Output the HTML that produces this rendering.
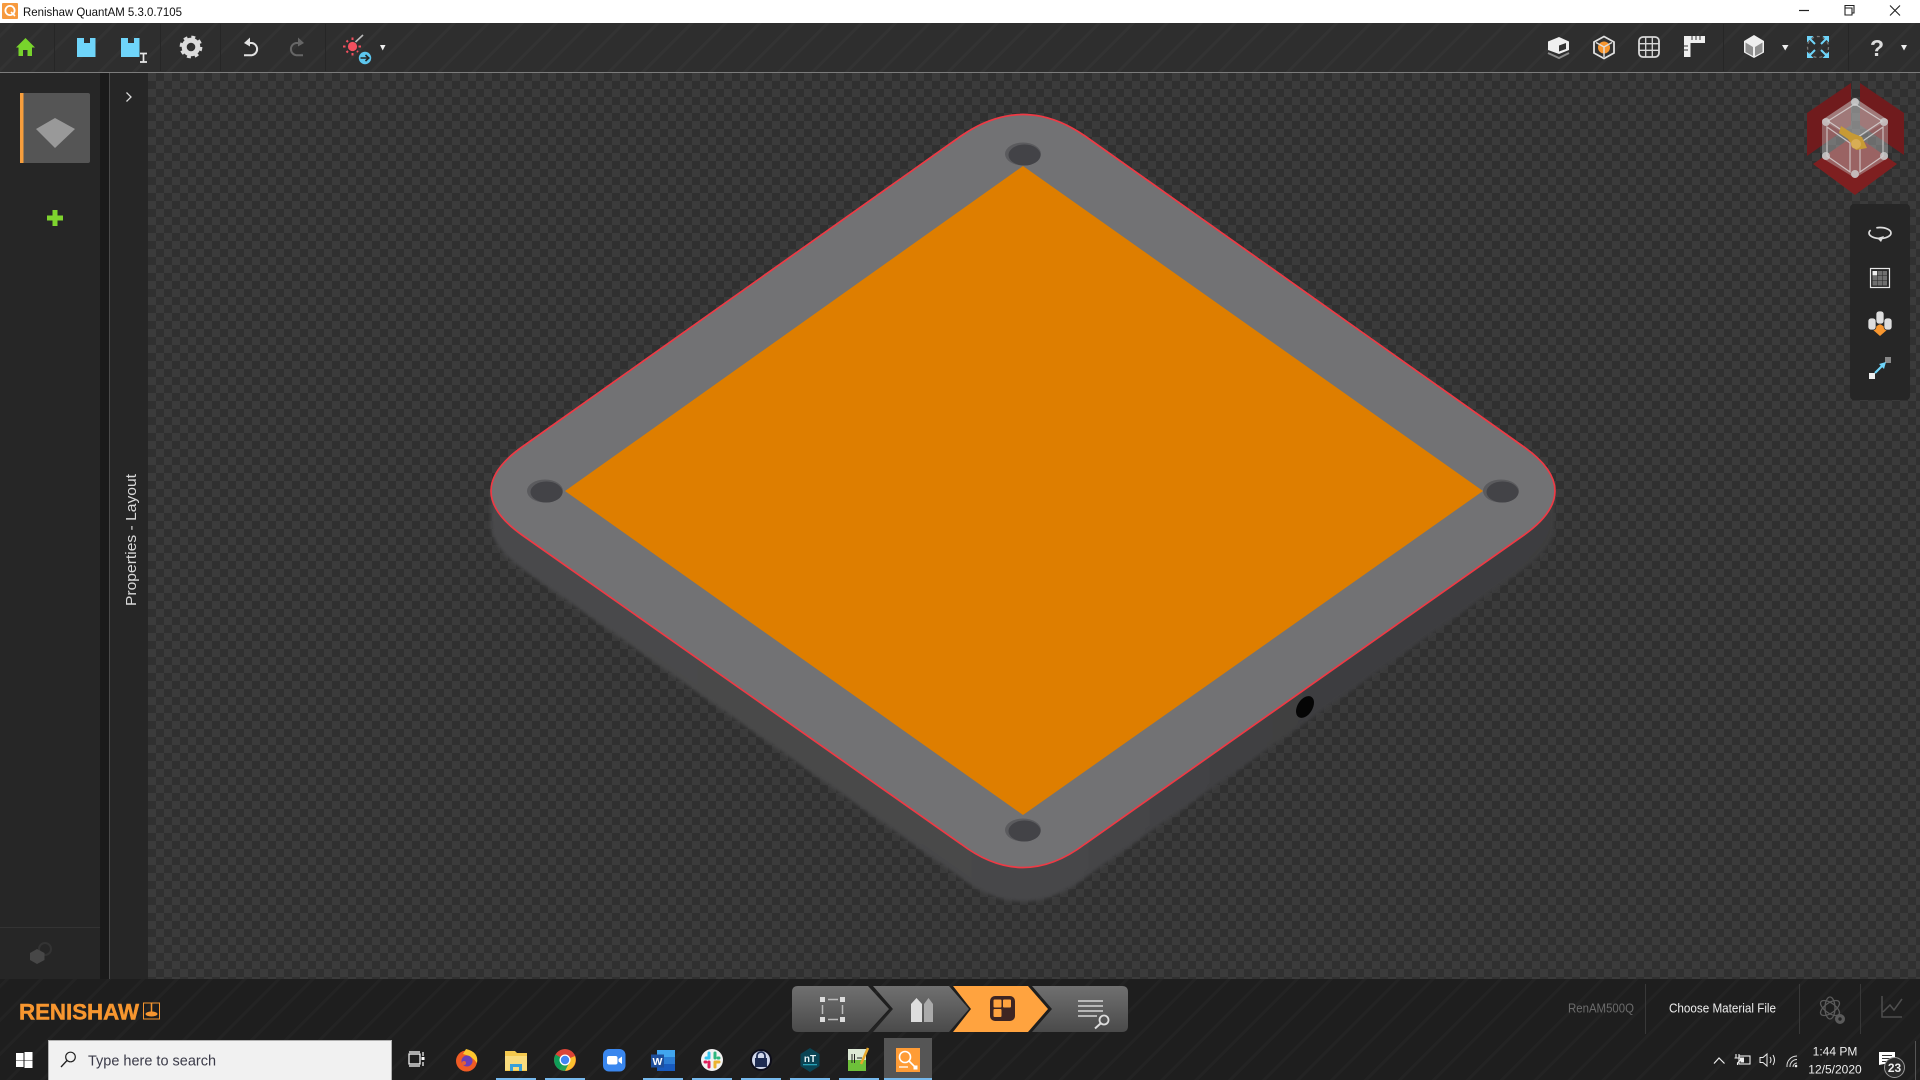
<!DOCTYPE html>
<html><head><meta charset="utf-8"><title>Renishaw QuantAM</title>
<style>html,body{margin:0;padding:0;background:#222;width:1920px;height:1080px;overflow:hidden}svg{display:block}text{font-family:"Liberation Sans",sans-serif}</style></head>
<body>
<svg xmlns="http://www.w3.org/2000/svg" width="1920" height="1080" viewBox="0 0 1920 1080">
<defs>
<pattern id="chk" x="148" y="73" width="16" height="16" patternUnits="userSpaceOnUse">
<rect width="16" height="16" fill="#303030"/><rect width="8" height="8" fill="#3b3b3b"/><rect x="8" y="8" width="8" height="8" fill="#3b3b3b"/>
</pattern>
<pattern id="st" width="24" height="24" patternUnits="userSpaceOnUse" patternTransform="rotate(45)">
<rect width="24" height="24" fill="none"/><rect width="3" height="24" fill="#fff" opacity=".022"/>
</pattern>
<linearGradient id="wall" gradientUnits="userSpaceOnUse" x1="491" y1="0" x2="1586" y2="0">
<stop offset="0" stop-color="#49494b"/><stop offset=".5" stop-color="#474749"/><stop offset=".75" stop-color="#3e3e40"/><stop offset="1" stop-color="#3c3c3e"/>
</linearGradient>
<linearGradient id="seg" x1="0" y1="0" x2="0" y2="1"><stop offset="0" stop-color="#707070"/><stop offset="1" stop-color="#4a4a4a"/></linearGradient>
<path id="plate" d="M961,136 Q1023,93 1085,136 L1524,447 Q1586,491 1524,535 L1085,844 Q1023,891 961,844 L522,535 Q460,491 522,447 Z"/>
<filter id="b1"><feGaussianBlur stdDeviation="1.8"/></filter>
</defs>

<!-- base -->
<rect width="1920" height="1080" fill="#222"/>
<rect x="148" y="73" width="1772" height="906" fill="url(#chk)"/>

<!-- title bar -->
<rect width="1920" height="23" fill="#fff"/>
<rect x="2" y="3" width="16" height="16" rx="1" fill="#f79a3e"/>
<circle cx="10" cy="10.5" r="4.6" fill="none" stroke="#fff" stroke-width="1.8"/><path d="M11,12 L15,16" stroke="#fff" stroke-width="1.6"/>
<text x="23" y="16" font-size="12.2" fill="#111" textLength="159" lengthAdjust="spacingAndGlyphs">Renishaw QuantAM 5.3.0.7105</text>
<path d="M1799,10.5 H1809" stroke="#222" stroke-width="1.2"/>
<path d="M1845,8 V5.5 H1854 V13 H1852 M1845,8 H1852 V15 H1845 Z" fill="none" stroke="#222" stroke-width="1.1"/>
<path d="M1890,5.5 L1900,15.5 M1900,5.5 L1890,15.5" stroke="#222" stroke-width="1.1"/>

<!-- toolbar -->
<rect y="23" width="1920" height="49" fill="#2e2e2e"/>
<rect y="23" width="1920" height="49" fill="url(#st)"/>
<rect y="72" width="1920" height="1" fill="#7c7c7c"/>
<g stroke="#262626" stroke-width="1"><path d="M54.5,24 V71 M160.5,24 V71 M220.5,24 V71 M325.5,24 V71 M1723.5,24 V71 M1848.5,24 V71"/></g>
<!-- home -->
<path d="M25.5,38 L35,47.5 H32 V56 H27.5 V50 H23 V56 H18.5 V47.5 H16 Z" fill="#78d42c"/>
<!-- save -->
<path d="M77,38 H84 V43 H90 V38 H95.5 V57 H77 Z" fill="#6fd5fa"/>
<path d="M121,38 H128 V43 H134 V38 H139.5 V57 H121 Z" fill="#6fd5fa"/>
<path d="M140,53.5 H147 M143.5,53.5 V62 M140,62 H147" stroke="#e8e8e8" stroke-width="1.7" fill="none"/>
<!-- gear -->
<circle cx="191" cy="47" r="6.8" fill="none" stroke="#dcdcdc" stroke-width="5"/>
<circle cx="191" cy="47" r="9.8" fill="none" stroke="#dcdcdc" stroke-width="3.2" stroke-dasharray="3.85 3.85"/>
<!-- undo / redo -->
<path d="M246,43 H252 A6.2,6.2 0 0 1 252,55.2 H244" fill="none" stroke="#e2e2e2" stroke-width="2"/>
<path d="M250,37.5 L244,43 L250,46.5 Z" fill="#e2e2e2"/>
<path d="M302,43 H296 A6.2,6.2 0 0 0 296,55.2 H303" fill="none" stroke="#666" stroke-width="2"/>
<path d="M298,37.5 L304,43 L298,46.5 Z" fill="#666"/>
<!-- laser -->
<circle cx="352.5" cy="46.5" r="4.6" fill="#f2505f"/>
<path d="M352.5,37.5 V40 M352.5,53 V55.5 M343,46.5 H345.5 M358.5,46.5 H361 M346.5,40.5 L348,42 M346.5,52.5 L348,51 M358,52 L357,51" stroke="#f2505f" stroke-width="2"/>
<path d="M355.5,42 L363,35" stroke="#bbb" stroke-width="1.6"/>
<circle cx="365" cy="58" r="6.2" fill="#5cc6ee"/>
<path d="M360.5,58 H368 M365.5,55 L368.8,58 L365.5,61" stroke="#222" stroke-width="1.6" fill="none"/>
<path d="M380,45 H385.5 L382.7,50.5 Z" fill="#eee"/>

<!-- right toolbar icons -->
<path d="M1559,37 L1569,41.5 V50 L1559,54 L1548,50 V41.5 Z" fill="#efefef"/>
<path d="M1559,45.5 L1566,43 V49 L1559,51.5 Z" fill="#333"/>
<path d="M1548,53 L1559,58 L1569,53" fill="none" stroke="#8a8a8a" stroke-width="2"/>
<path d="M1604,36.5 L1614,42 V53 L1604,58.5 L1594,53 V42 Z" fill="#333" stroke="#e0e0e0" stroke-width="1.8"/>
<circle cx="1604" cy="47.5" r="6" fill="#f7962f"/>
<path d="M1596,42.5 L1604,47 L1612,42.5 M1604,47 V57" fill="none" stroke="#e0e0e0" stroke-width="1.4"/>
<rect x="1639" y="37" width="20" height="20" rx="4" fill="none" stroke="#d8d8d8" stroke-width="1.8"/>
<path d="M1645.7,37 V57 M1652.3,37 V57 M1639,43.7 H1659 M1639,50.3 H1659" stroke="#d8d8d8" stroke-width="1.3"/>
<path d="M1684,36 H1705 V43 H1690.5 V57 H1684 Z" fill="#efefef"/>
<path d="M1692,36 V40 M1696,36 V40 M1700,36 V40 M1688,46 H1684 M1688,50 H1684" stroke="#333" stroke-width="1"/>
<path d="M1754,35 L1764,41 V52.5 L1754,58 L1744,52.5 V41 Z" fill="#eee"/>
<path d="M1745.5,42.5 L1753,47 V56 L1745.5,52 Z" fill="#8f8f8f"/><path d="M1762.5,42.5 L1755,47 V56 L1762.5,52 Z" fill="#8f8f8f"/>
<path d="M1782,45 H1788.5 L1785.2,50.5 Z" fill="#eee"/>
<!-- fullscreen -->
<circle cx="1818" cy="47" r="10.5" fill="none" stroke="#777" stroke-width="1.3" stroke-dasharray="3 3"/>
<g stroke="#6fd5fa" stroke-width="2" fill="none"><path d="M1809,38 L1815,44 M1827,38 L1821,44 M1809,56 L1815,50 M1827,56 L1821,50"/></g>
<path d="M1807,36 H1813.5 L1807,42.5 Z M1829,36 H1822.5 L1829,42.5 Z M1807,58 H1813.5 L1807,51.5 Z M1829,58 H1822.5 L1829,51.5 Z" fill="#6fd5fa"/>
<text x="1877" y="56" font-size="23" font-weight="bold" fill="#dcdcdc" text-anchor="middle">?</text>
<path d="M1901,45 H1907 L1904,50.5 Z" fill="#eee"/>

<!-- left sidebar -->
<rect y="73" width="100" height="906" fill="#262626"/>
<rect x="100" y="73" width="9" height="906" fill="#1a1a1a"/>
<rect x="109" y="73" width="1" height="906" fill="#4a4a4a"/>
<rect x="110" y="73" width="38" height="906" fill="#262626"/>
<rect x="0" y="927" width="100" height="1" fill="#333"/>
<rect x="20" y="93" width="70" height="70" rx="2" fill="#555"/>
<rect x="20" y="93" width="3.5" height="70" fill="#f79e3c"/>
<path d="M36,129 L55,118 L75,129 L55,148 Z" fill="#999"/>
<path d="M52.5,210 H57.5 V215.5 H63 V220.5 H57.5 V226 H52.5 V220.5 H47 V215.5 H52.5 Z" fill="#7ed42e"/>
<path d="M126.5,92.500 L131,97 L126.5,101.500" fill="none" stroke="#ddd" stroke-width="1.3"/>
<text transform="translate(136,606) rotate(-90)" font-size="14.5" fill="#d8d8d8" textLength="132" lengthAdjust="spacingAndGlyphs">Properties - Layout</text>
<circle cx="45" cy="949" r="6" fill="none" stroke="#333" stroke-width="2"/>
<path d="M37,949 L44.5,953 V960 L37,964 L30,960 V953 Z" fill="#474747"/>

<!-- 3D plate -->
<g filter="url(#b1)">
<use href="#plate" fill="url(#wall)" transform="translate(0,34)"/>
<rect x="491" y="491" width="1064" height="34" fill="url(#wall)"/>
</g>
<ellipse cx="1305" cy="707" rx="7.5" ry="12" fill="#050505" transform="rotate(32 1305 707)"/>
<use href="#plate" fill="#727274"/>
<use href="#plate" fill="none" stroke="#ee3a45" stroke-width="1.7"/>
<path d="M1023,166 L1483,491 L1023,815 L565,491 Z" fill="#de7e00"/>
<g>
<ellipse cx="1023" cy="154" rx="18" ry="11.5" fill="#5b5b5e"/><ellipse cx="1024.5" cy="155" rx="16" ry="10.5" fill="#434347"/>
<ellipse cx="545" cy="491" rx="18" ry="11.5" fill="#5b5b5e"/><ellipse cx="546.5" cy="492" rx="16" ry="10.5" fill="#434347"/>
<ellipse cx="1501" cy="491" rx="18" ry="11.5" fill="#5b5b5e"/><ellipse cx="1502.5" cy="492" rx="16" ry="10.5" fill="#434347"/>
<ellipse cx="1023" cy="830" rx="18" ry="11.5" fill="#5b5b5e"/><ellipse cx="1024.5" cy="831" rx="16" ry="10.5" fill="#434347"/>
</g>

<!-- view cube -->
<path d="M1807,113 L1851,83 V125 L1807,156 Z" fill="#701b1d"/>
<path d="M1860,83 L1904,113 V155 L1860,125 Z" fill="#701b1d"/>
<path d="M1813,164 L1855,135 L1897,164 L1855,195 Z" fill="#7e1f20"/>
<path d="M1855,98 L1888,120 V158 L1855,178 L1822,158 V120 Z" fill="#c0c0c0" opacity=".42"/>
<path d="M1855,98 L1888,120 L1855,140 L1822,120 Z" fill="#d0d0d0" opacity=".22"/>
<g fill="none" stroke="#dedede" stroke-width="1.2" opacity=".75"><path d="M1855,104 L1882,121 L1855,139 L1828,121 Z M1827,127 L1850,143 V172 L1827,156 Z M1883,127 L1860,143 V172 L1883,156 Z"/></g>
<g fill="#cfcfcf" opacity=".8"><circle cx="1855" cy="102" r="4"/><circle cx="1884" cy="122" r="4"/><circle cx="1884" cy="156" r="4"/><circle cx="1855" cy="174" r="4"/><circle cx="1826" cy="156" r="4"/><circle cx="1826" cy="122" r="4"/><circle cx="1855" cy="145" r="3.500"/></g>
<path d="M1841,126 L1852,133 L1862,137 L1867,148 L1856,150 L1848,139 L1839,133 Z" fill="#c79a35"/>
<circle cx="1856" cy="144" r="5" fill="#d8ad55"/>

<!-- right floating panel -->
<rect x="1850" y="204" width="60" height="196" rx="4" fill="#262626"/>
<g>
<ellipse cx="1880" cy="233" rx="11" ry="5.5" fill="none" stroke="#ddd" stroke-width="1.7" stroke-dasharray="30 6" />
<path d="M1884,236 L1877,238 L1881,242 Z" fill="#ddd"/>
<rect x="1870.5" y="268.5" width="19" height="19" fill="none" stroke="#e6e6e6" stroke-width="1.2"/>
<g fill="#6e6e6e"><rect x="1877.500" y="271" width="4.500" height="4.500"/><rect x="1882.500" y="271" width="4.500" height="4.500"/><rect x="1872.500" y="276" width="4.500" height="4.500"/><rect x="1877.500" y="276" width="4.500" height="4.500"/><rect x="1882.500" y="276" width="4.500" height="4.500"/><rect x="1872.500" y="281" width="4.500" height="4.500"/><rect x="1877.500" y="281" width="4.500" height="4.500"/><rect x="1882.500" y="281" width="4.500" height="4.500"/></g>
<rect x="1872.5" y="271" width="4.5" height="4.5" fill="#eee"/>
<path d="M1872,329 L1880,324 L1888,329 L1880,336 Z" fill="#f7962f"/>
<rect x="1876" y="311" width="8" height="13" rx="3" fill="#ddd" stroke="#262626" stroke-width=".7"/><rect x="1868" y="318" width="8" height="12" rx="3" fill="#ddd" stroke="#262626" stroke-width=".7"/><rect x="1884" y="318" width="8" height="12" rx="3" fill="#ddd" stroke="#262626" stroke-width=".7"/>
<rect x="1869" y="373" width="6" height="6" fill="#eee"/><rect x="1885" y="357" width="6" height="6" fill="#888"/>
<path d="M1875,373 L1884,364" stroke="#6fd5fa" stroke-width="2.2"/><path d="M1886,362 L1879,364 L1884,369 Z" fill="#6fd5fa"/>
</g>

<!-- bottom bar -->
<rect y="979" width="1920" height="101" fill="#1e1e1e"/>
<rect y="979" width="1920" height="101" fill="url(#st)"/>
<text x="19" y="1019.5" font-size="22.5" font-weight="bold" fill="#f7962f" textLength="120" lengthAdjust="spacingAndGlyphs" stroke="#f7962f" stroke-width=".5">RENISHAW</text>
<rect x="143.5" y="1003" width="16" height="16" fill="none" stroke="#f7962f" stroke-width="1"/>
<ellipse cx="151.5" cy="1014" rx="6" ry="2.5" fill="#f7962f"/><path d="M151.5,1003 V1012" stroke="#f7962f" stroke-width="1.5"/>

<!-- stepper -->
<path d="M798,986 H868 L889,1009 L868,1032 H798 Q792,1032 792,1026 V992 Q792,986 798,986 Z" fill="url(#seg)"/>
<path d="M873,986 H949 L969,1009 L949,1032 H873 L893,1009 Z" fill="url(#seg)"/>
<path d="M953,986 H1028 L1048,1009 L1028,1032 H953 L971,1009 Z" fill="#ffa33f"/>
<path d="M1032,986 H1122 Q1128,986 1128,992 V1026 Q1128,1032 1122,1032 H1032 L1052,1009 Z" fill="url(#seg)"/>
<g fill="#dcdcdc"><rect x="820" y="997" width="5" height="5"/><rect x="840" y="997" width="5" height="5"/><rect x="820" y="1017" width="5" height="5"/><rect x="840" y="1017" width="5" height="5"/></g>
<path d="M828,999.5 H838 M828,1019.5 H838 M822.5,1005 V1014 M842.5,1005 V1014" stroke="#bbb" stroke-width="1.5"/>
<path d="M911,1004 L916.5,998 L922,1004 V1022 H911 Z" fill="#dedede"/>
<path d="M924,1004 L928.5,998 L933,1004 V1022 H924 Z" fill="#aaa"/>
<rect x="990" y="996" width="25" height="25" rx="5" fill="#3e2522"/>
<rect x="993.5" y="999.500" width="8" height="8" rx="1" fill="#ffa33f"/><rect x="1003" y="999.500" width="8" height="8" rx="1" fill="#ffa33f"/><rect x="993.5" y="1009" width="8" height="8" rx="1" fill="#ffa33f"/>
<path d="M1078,1001 H1103 M1078,1006 H1103 M1078,1011 H1103 M1078,1016 H1097" stroke="#c4c4c4" stroke-width="1.8"/>
<circle cx="1104" cy="1020" r="4.5" fill="none" stroke="#ddd" stroke-width="1.8"/><path d="M1100.5,1023.5 L1095,1028.5" stroke="#ddd" stroke-width="2"/>

<!-- bottom right -->
<text x="1568" y="1012.5" font-size="12.5" fill="#6b6b6b" textLength="66" lengthAdjust="spacingAndGlyphs">RenAM500Q</text>
<text x="1669" y="1012.5" font-size="12.5" fill="#eee" textLength="107" lengthAdjust="spacingAndGlyphs">Choose Material File</text>
<path d="M1645.5,984 V1034 M1799.5,984 V1034 M1860.5,984 V1034" stroke="#383838"/>
<g fill="none" stroke="#5a5a5a" stroke-width="1.3"><ellipse cx="1830" cy="1008" rx="11" ry="5" transform="rotate(35 1830 1008)"/><ellipse cx="1830" cy="1008" rx="11" ry="5" transform="rotate(-35 1830 1008)"/><ellipse cx="1830" cy="1008" rx="11" ry="5" transform="rotate(90 1830 1008)"/></g>
<circle cx="1840" cy="1019" r="5" fill="#5a5a5a"/><circle cx="1840" cy="1019" r="1.7" fill="#222"/>
<path d="M1882,996 V1017 H1902 M1883,1012 L1890,1005 L1894,1010 L1902,999" fill="none" stroke="#4e4e4e" stroke-width="1.5"/>

<!-- taskbar -->
<g fill="#fff"><rect x="16" y="1053" width="7.5" height="7"/><rect x="24.5" y="1052" width="8" height="8"/><rect x="16" y="1060.5" width="7.5" height="6.5"/><rect x="24.5" y="1060.5" width="8" height="7.5"/></g>
<rect x="48.5" y="1040.5" width="343" height="40" fill="#f1f1f1" stroke="#b0b0b0"/>
<circle cx="70.5" cy="1057" r="4.8" fill="none" stroke="#222" stroke-width="1.2"/><path d="M67,1060.5 L61,1067" stroke="#222" stroke-width="1.3"/>
<text x="88" y="1065.5" font-size="15" fill="#3a3a48" textLength="128" lengthAdjust="spacingAndGlyphs">Type here to search</text>
<path d="M409,1054 H420 V1064 H409 Z M409,1052 H420 M409,1066 H420 M423,1052 V1056 M423,1062 V1066" fill="none" stroke="#fff" stroke-width="1.2"/><rect x="421.5" y="1057" width="3" height="3" fill="#fff"/>

<!-- app icons -->
<circle cx="466.5" cy="1061" r="10.5" fill="#ef5b24"/><path d="M466,1049 Q479,1052 477,1063 Q472,1056 463,1054 Z" fill="#fcc52e"/><circle cx="467" cy="1061" r="5.5" fill="#6a3fb5"/><circle cx="464" cy="1063" r="2" fill="#e0603a"/>
<path d="M505,1051 H515 L517,1053 H527 V1071 H505 Z" fill="#f4c94e"/><rect x="505" y="1056" width="22" height="14" fill="#f9dc7d"/><path d="M510,1064 H522 V1071 H519 V1067 H513 V1071 H510 Z" fill="#3aa0d8"/>
<circle cx="565" cy="1060" r="11" fill="#db4437"/><path d="M565,1060 L555.5,1054.5 A11,11 0 0 0 559.5,1069.5 Z" fill="#0f9d58"/><path d="M565,1060 L559.5,1069.5 A11,11 0 0 0 575,1056 Z" fill="#fbc02d"/><path d="M565,1060 L555.5,1065.5 A11,11 0 0 0 565,1071 L570.5,1060 Z" fill="#0f9d58" opacity=".9"/><circle cx="565" cy="1060" r="5.5" fill="#fff"/><circle cx="565" cy="1060" r="4.2" fill="#4285f4"/>
<rect x="603" y="1049" width="22.5" height="22.5" rx="6" fill="#3a87ee"/><rect x="607" y="1056" width="10.5" height="8.5" rx="2" fill="#fff"/><path d="M618.5,1059 L622,1056.5 V1064 L618.5,1061.5 Z" fill="#fff"/>
<rect x="657" y="1050" width="18" height="21" fill="#2b7cd3"/><rect x="657" y="1050" width="18" height="7" fill="#41a5ee"/><rect x="657" y="1064" width="18" height="7" fill="#185abd"/>
<rect x="651" y="1054.5" width="13" height="13" fill="#1e4f9c"/><text x="657.5" y="1065" font-size="10.5" font-weight="bold" fill="#fff" text-anchor="middle">W</text>
<circle cx="712" cy="1060" r="11" fill="#f2f2f2"/><g stroke-width="3" stroke-linecap="round"><path d="M709,1053 V1058 M706,1058 H708" stroke="#36c5f0"/><path d="M715,1053 V1058 M718,1058 H719" stroke="#2eb67d"/><path d="M709,1062 V1067 M705,1062 H706" stroke="#e01e5a"/><path d="M715,1062 V1067 M716,1062 H719" stroke="#ecb22e"/></g>
<circle cx="761" cy="1060" r="11" fill="#0d0d1a"/><circle cx="761" cy="1060" r="9" fill="#cfd6ea"/><path d="M757,1059 V1056 A4,4 0 0 1 765,1056 V1059" fill="none" stroke="#1d2b52" stroke-width="1.8"/><rect x="755" y="1058" width="12" height="9" fill="#1d2b52"/>
<path d="M810,1048 L819.5,1054 V1066 L810,1072 L800.5,1066 V1054 Z" fill="#0a4454"/><text x="810" y="1062" font-size="10" font-weight="bold" fill="#e8f4f8" text-anchor="middle">nT</text><rect x="803" y="1064" width="14" height="1.3" fill="#26a0b5"/>
<rect x="848" y="1049" width="18" height="22" fill="#dce8d4"/><rect x="848" y="1060" width="18" height="11" fill="#6ec03a"/><path d="M852,1054 V1063 M854.5,1054 V1063 M857,1058 H862" stroke="#222" stroke-width="1"/><path d="M868,1048 L861,1064" stroke="#e8a92c" stroke-width="2.5"/>
<rect x="884" y="1038" width="48" height="42" fill="#555"/>
<rect x="896" y="1048" width="24" height="24" fill="#ff9c36"/>
<circle cx="905" cy="1057" r="5.5" fill="none" stroke="#fff" stroke-width="1.6"/><path d="M909,1061 L916,1068" stroke="#fff" stroke-width="1.6"/><path d="M899,1067 H908" stroke="#fff" stroke-width="1.3"/><rect x="913.5" y="1065.5" width="4" height="4" fill="#fff"/>
<g fill="#76b9ed"><rect x="496" y="1078" width="40" height="2"/><rect x="545" y="1078" width="40" height="2"/><rect x="643" y="1078" width="40" height="2"/><rect x="692" y="1078" width="40" height="2"/><rect x="741" y="1078" width="40" height="2"/><rect x="790" y="1078" width="40" height="2"/><rect x="839" y="1078" width="40" height="2"/><rect x="884" y="1078" width="48" height="2"/></g>

<!-- tray -->
<path d="M1714,1063.5 L1719,1058 L1724.5,1063.5" fill="none" stroke="#eee" stroke-width="1.2"/>
<rect x="1739" y="1056" width="11" height="8" fill="none" stroke="#eee" stroke-width="1.1"/><rect x="1740.5" y="1057.5" width="3.5" height="5" fill="#eee"/><path d="M1736,1054 V1058 M1739,1054 V1058 M1734.5,1058 H1740.5 V1060 L1737.5,1063 V1065" fill="none" stroke="#eee" stroke-width="1.1"/>
<path d="M1760,1057.5 H1763 L1767,1054 V1066 L1763,1062.5 H1760 Z M1770,1057 Q1772,1060 1770,1063 M1773,1055 Q1776,1060 1773,1065" fill="none" stroke="#eee" stroke-width="1"/>
<g fill="none" stroke="#ddd" stroke-width="1"><path d="M1787,1067 A10,10 0 0 1 1797,1056 M1790,1067 A7,7 0 0 1 1797,1059.5 M1793,1067 A4,4 0 0 1 1797,1063"/></g><circle cx="1796" cy="1066" r="1.3" fill="#eee"/>
<text x="1835" y="1055.5" font-size="12" fill="#eee" text-anchor="middle">1:44 PM</text>
<text x="1835" y="1073.5" font-size="12" fill="#eee" text-anchor="middle">12/5/2020</text>
<path d="M1879,1052 H1895 V1064 H1884 L1879,1065 Z" fill="#fff"/><path d="M1882,1055.5 H1892 M1882,1058.5 H1892 M1882,1061.5 H1889" stroke="#333" stroke-width="1"/>
<circle cx="1894.5" cy="1067.5" r="10" fill="#2a2a2a" stroke="#999" stroke-width="1"/>
<text x="1894.5" y="1072" font-size="12" font-weight="bold" fill="#eee" text-anchor="middle">23</text>
<rect x="1915" y="1041" width="1" height="39" fill="#555"/>
</svg>
</body></html>
